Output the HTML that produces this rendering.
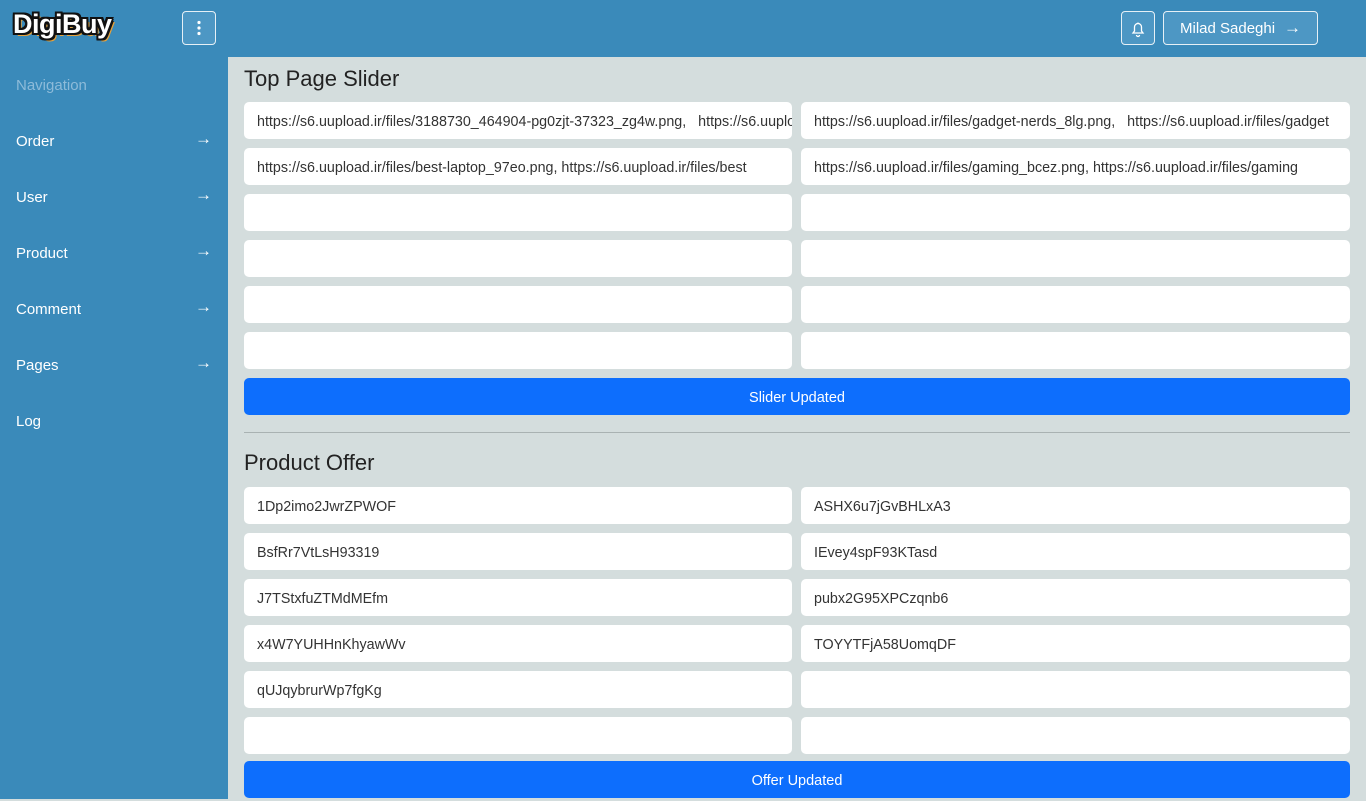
<!DOCTYPE html>
<html><head><meta charset="utf-8"><style>
*{box-sizing:border-box;margin:0;padding:0}
body{width:1366px;height:799px;overflow:hidden;background:#d4dddd;font-family:"Liberation Sans",sans-serif;position:relative}
.top{position:absolute;left:0;top:0;width:1366px;height:57px;background:#3a8aba}
.side{position:absolute;left:0;top:57px;width:228px;height:742px;background:#3a8aba}
.logo{position:absolute;left:13px;top:9px;font-size:27px;font-weight:bold;color:#fff;letter-spacing:-0.5px;text-shadow:2px 0 #111,-2px 0 #111,0 2px #111,0 -2px #111,2px 2px #111,-2px -2px #111,2px -2px #111,-2px 2px #111,3px 3px #e6a23c}
.btn{position:absolute;border:1px solid #e6f0f6;border-radius:4px;background:#4d97c4;color:#fff}
.nav{position:absolute;left:16px;font-size:15px;color:#fff;line-height:18px}
.arr{position:absolute;left:195px;color:#fff;font-size:17px;line-height:18px}
.inp{position:absolute;height:37px;background:#fff;border-radius:5px;font-size:14.3px;color:#333;padding:0 13px;line-height:40px;white-space:nowrap;overflow:hidden}
.l{left:244px;width:548px}.r{left:801px;width:549px}
.pb{position:absolute;left:244px;width:1106px;height:37px;background:#0d6efd;border-radius:5px;color:#fff;font-size:14.5px;text-align:center;line-height:40px}
h2{position:absolute;left:244px;font-size:22px;font-weight:normal;color:#222}
</style></head><body>
<div class="top"></div>
<div class="side"></div>
<div class="logo">DigiBuy</div>
<div class="btn" style="left:182px;top:11px;width:34px;height:34px">
<svg width="32" height="32" viewBox="0 0 32 32"><circle cx="16" cy="10.5" r="1.6" fill="#fff"/><circle cx="16" cy="16" r="1.6" fill="#fff"/><circle cx="16" cy="21.5" r="1.6" fill="#fff"/></svg></div>
<div class="btn" style="left:1121px;top:11px;width:34px;height:34px">
<svg width="32" height="32" viewBox="0 0 32 32" fill="none" stroke="#fff" stroke-width="1.3"><path d="M11 21h10l-1.5-2v-4a3.5 3.5 0 0 0-7 0v4z"/><path d="M14.5 23a1.5 1.5 0 0 0 3 0"/><path d="M16 10.5v1"/></svg></div>
<div class="btn" style="left:1163px;top:11px;width:155px;height:34px;font-size:15px;line-height:34px;padding-left:16px">Milad Sadeghi<span style="position:absolute;left:120px;top:0;font-size:17px;line-height:31px">→</span></div>

<div class="nav" style="top:133px;color:#8dbbd9;top:77px">Navigation</div>
<div class="nav" style="top:133px">Order</div><div class="arr" style="top:130px">→</div>
<div class="nav" style="top:189px">User</div><div class="arr" style="top:186px">→</div>
<div class="nav" style="top:245px">Product</div><div class="arr" style="top:242px">→</div>
<div class="nav" style="top:301px">Comment</div><div class="arr" style="top:298px">→</div>
<div class="nav" style="top:357px">Pages</div><div class="arr" style="top:354px">→</div>
<div class="nav" style="top:413px">Log</div>

<h2 style="top:66px">Top Page Slider</h2>
<div class="inp l" style="top:102px">https://s6.uupload.ir/files/3188730_464904-pg0zjt-37323_zg4w.png,&nbsp;&nbsp; https://s6.uupload.ir</div>
<div class="inp r" style="top:102px">https://s6.uupload.ir/files/gadget-nerds_8lg.png,&nbsp;&nbsp; https://s6.uupload.ir/files/gadget</div>
<div class="inp l" style="top:148px">https://s6.uupload.ir/files/best-laptop_97eo.png, https://s6.uupload.ir/files/best</div>
<div class="inp r" style="top:148px">https://s6.uupload.ir/files/gaming_bcez.png, https://s6.uupload.ir/files/gaming</div>
<div class="inp l" style="top:194px"></div><div class="inp r" style="top:194px"></div>
<div class="inp l" style="top:240px"></div><div class="inp r" style="top:240px"></div>
<div class="inp l" style="top:286px"></div><div class="inp r" style="top:286px"></div>
<div class="inp l" style="top:332px"></div><div class="inp r" style="top:332px"></div>
<div class="pb" style="top:378px">Slider Updated</div>
<div style="position:absolute;left:244px;top:432px;width:1106px;height:1px;background:#a9b2b2"></div>

<h2 style="top:450px">Product Offer</h2>
<div class="inp l" style="top:487px">1Dp2imo2JwrZPWOF</div><div class="inp r" style="top:487px">ASHX6u7jGvBHLxA3</div>
<div class="inp l" style="top:533px">BsfRr7VtLsH93319</div><div class="inp r" style="top:533px">IEvey4spF93KTasd</div>
<div class="inp l" style="top:579px">J7TStxfuZTMdMEfm</div><div class="inp r" style="top:579px">pubx2G95XPCzqnb6</div>
<div class="inp l" style="top:625px">x4W7YUHHnKhyawWv</div><div class="inp r" style="top:625px">TOYYTFjA58UomqDF</div>
<div class="inp l" style="top:671px">qUJqybrurWp7fgKg</div><div class="inp r" style="top:671px"></div>
<div class="inp l" style="top:717px"></div><div class="inp r" style="top:717px"></div>
<div class="pb" style="top:761px">Offer Updated</div>
</body></html>
